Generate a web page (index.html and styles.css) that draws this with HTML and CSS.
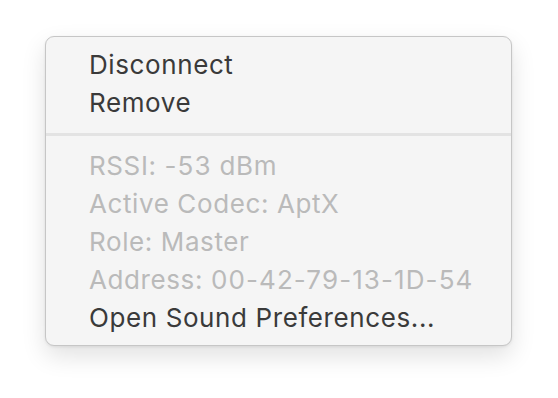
FILE: index.html
```html
<!DOCTYPE html>
<html>
<head>
<meta charset="utf-8">
<link rel="stylesheet" href="styles.css">
</head>
<body>
<div class="menu">
  <div class="group">
    <div class="item">Disconnect</div>
    <div class="item">Remove</div>
  </div>
  <div class="sep"></div>
  <div class="group">
    <div class="item disabled">RSSI: <span class="num">-53</span> dBm</div>
    <div class="item disabled">Active Codec: AptX</div>
    <div class="item disabled">Role: Master</div>
    <div class="item disabled">Address: <span class="num">00-42-79-13-1D-54</span></div>
    <div class="item">Open Sound Preferences...</div>
  </div>
</div>
</body>
</html>
```
FILE: styles.css
```css
html, body {
  margin: 0;
  background: #ffffff;
}
body {
  min-height: 100vh;
  box-sizing: border-box;
  padding: 36px 0 0 45px;
  font-family: Inter, "Noto Sans", sans-serif;
}
.menu {
  width: 465px;
  background: #f5f5f5;
  border: 1px solid #c6c6c6;
  border-radius: 9px;
  box-shadow: 0 10px 24px rgba(0,0,0,0.12), 0 1px 3px rgba(0,0,0,0.08);
  padding: 9px 0 8px;
}
.item {
  font-size: 26px;
  letter-spacing: 0.6px;
  line-height: 38px;
  height: 38px;
  padding-left: 43px;
  color: #3a3a3a;
}
.item.disabled {
  color: #bababa;
}
.num {
  letter-spacing: 1.1px;
}
.sep {
  height: 3px;
  background: #e3e3e3;
  margin: 11px 0 11px;
}
```
